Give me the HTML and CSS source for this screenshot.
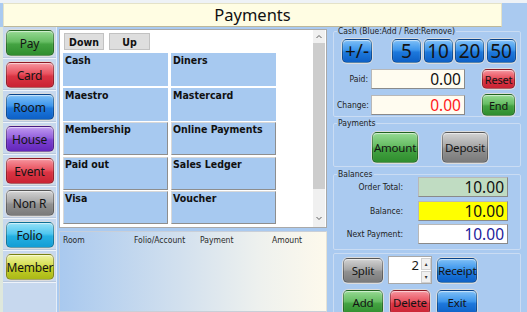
FILE: index.html
```html
<!DOCTYPE html>
<html lang="en">
<head>
  <meta charset="UTF-8" />
  <meta name="viewport" content="width=device-width, initial-scale=1.0"/>
  <title>Payments</title>
  <link rel="stylesheet" href="styles.css">
</head>
<body>
<div class="title-row">
  <div class="title">Payments</div>
</div>
<div class="main">
  <div class="side">
    <div class="side-cell"><button class="gbtn green">Pay</button></div>
    <div class="side-cell"><button class="gbtn red">Card</button></div>
    <div class="side-cell"><button class="gbtn blue">Room</button></div>
    <div class="side-cell"><button class="gbtn purple">House</button></div>
    <div class="side-cell"><button class="gbtn red">Event</button></div>
    <div class="side-cell"><button class="gbtn grey">Non R</button></div>
    <div class="side-cell"><button class="gbtn cyan">Folio</button></div>
    <div class="side-cell"><button class="gbtn lime">Member</button></div>
  </div>

  <div class="centre">
    <div class="tiles-box">
      <div class="tiles-area">
        <div class="pager">
          <button class="pager-btn">Down</button>
          <button class="pager-btn up">Up</button>
        </div>
        <div class="tiles">
          <div class="tile flat">Cash</div>
          <div class="tile flat">Diners</div>
          <div class="tile flat">Maestro</div>
          <div class="tile flat">Mastercard</div>
          <div class="tile">Membership</div>
          <div class="tile">Online Payments</div>
          <div class="tile">Paid out</div>
          <div class="tile">Sales Ledger</div>
          <div class="tile">Visa</div>
          <div class="tile">Voucher</div>
        </div>
      </div>
      <div class="vscroll">
        <svg class="arrow" width="12" height="10" viewBox="0 0 12 10"><path d="M3.5 6 L6 3.5 L8.5 6" fill="none" stroke="#606060" stroke-width="1"/></svg>
        <div class="thumb"></div>
        <div class="track"></div>
        <svg class="arrow" width="12" height="10" viewBox="0 0 12 10"><path d="M3.5 4 L6 6.5 L8.5 4" fill="none" stroke="#606060" stroke-width="1"/></svg>
      </div>
    </div>
    <div class="list">
      <div class="list-head">
        <span class="col-room">Room</span>
        <span class="col-folio">Folio/Account</span>
        <span class="col-pay">Payment</span>
        <span class="col-amt">Amount</span>
      </div>
    </div>
  </div>

  <div class="right">
    <fieldset class="group cash">
      <legend>Cash (Blue:Add / Red:Remove)</legend>
      <div class="coin-row">
        <button class="gbtn blue big plusminus">+/-</button>
        <div class="coins">
          <button class="gbtn blue big coin">5</button>
          <button class="gbtn blue big coin">10</button>
          <button class="gbtn blue big coin">20</button>
          <button class="gbtn blue big coin">50</button>
        </div>
      </div>
      <div class="field-row">
        <span class="field-label">Paid:</span>
        <div class="value cream">0.00</div>
        <button class="gbtn red small-side">Reset</button>
      </div>
      <div class="field-row second">
        <span class="field-label">Change:</span>
        <div class="value cream neg">0.00</div>
        <button class="gbtn green small-side tall">End</button>
      </div>
    </fieldset>

    <fieldset class="group payments">
      <legend>Payments</legend>
      <div class="pay-row">
        <button class="gbtn green pay-btn">Amount</button>
        <button class="gbtn grey pay-btn">Deposit</button>
      </div>
    </fieldset>

    <fieldset class="group balances">
      <legend>Balances</legend>
      <div class="bal-row first">
        <span class="bal-label">Order Total:</span>
        <div class="value mint">10.00</div>
      </div>
      <div class="bal-row">
        <span class="bal-label">Balance:</span>
        <div class="value yellow">10.00</div>
      </div>
      <div class="bal-row">
        <span class="bal-label">Next Payment:</span>
        <div class="value white navy">10.00</div>
      </div>
    </fieldset>

    <fieldset class="group actions">
      <div class="act-row">
        <button class="gbtn grey act">Split</button>
        <div class="spin">
          <span class="spin-val">2</span>
          <div class="spin-btns">
            <span class="spin-btn">&#9652;</span>
            <span class="spin-btn">&#9662;</span>
          </div>
        </div>
        <button class="gbtn blue act">Receipt</button>
      </div>
      <div class="act-row second">
        <button class="gbtn green act">Add</button>
        <button class="gbtn red act">Delete</button>
        <button class="gbtn blue act">Exit</button>
      </div>
    </fieldset>
  </div>
</div>
</body>
</html>
```

FILE: styles.css
```css
body {
  margin: 0;
  width: 527px;
  height: 312px;
  overflow: hidden;
  background-color: #aacaf0;
  font-family: "DejaVu Sans Condensed", "DejaVu Sans", sans-serif;
  color: #1a1a1a;
}

button {
  font-family: inherit;
  cursor: pointer;
}

/* title bar */

.title-row {
  height: 27px;
  background: linear-gradient(to bottom, #eef2f6 0, #eef2f6 3px, #aacaf0 3px);
}

.title {
  box-sizing: border-box;
  margin-left: 3px;
  position: relative;
  top: 3px;
  width: 499px;
  height: 24px;
  background-color: #fffde3;
  border: 1px solid #e4e2c8;
  border-bottom-color: #bdb89a;
  text-align: center;
  font-family: "Noto Sans", sans-serif;
  font-size: 16.5px;
  line-height: 22px;
  color: #111;
}

.main {
  display: flex;
  height: 285px;
}

/* left column */

.side {
  box-sizing: border-box;
  width: 57px;
  margin-right: 2px;
  background-color: #c7d8ee;
  border-left: 3px solid #dfe8dc;
  border-right: 1px solid #e6eef8;
}

.side-cell {
  box-sizing: border-box;
  height: 32px;
  padding-top: 3px;
  border-bottom: 1px solid #eef3fa;
  box-shadow: inset 0 -1px 0 #b9c8dc;
  display: flex;
  justify-content: center;
}

.side-cell .gbtn {
  width: 48px;
  height: 26px;
  font-size: 12px;
  letter-spacing: -0.2px;
}

/* glossy buttons */

.gbtn {
  border: 1px solid rgba(0, 0, 0, 0.3);
  border-radius: 5px;
  padding: 0;
  font-family: "Noto Sans", sans-serif;
  font-size: 12px;
  color: #141414;
  box-shadow: 0 0 0 1px #dcdcdc, inset 0 1px 1px rgba(255, 255, 255, 0.6);
}

.green  { background: linear-gradient(to bottom, #95d992 0%, #66bd63 45%, #44a342 55%, #2f8d2e 100%); }
.red    { background: linear-gradient(to bottom, #f6959e 0%, #e9525f 45%, #da3544 55%, #c92333 100%); }
.blue   { background: linear-gradient(to bottom, #7fc0f7 0%, #3d96ec 45%, #1d78dc 55%, #0d60c6 100%); }
.purple { background: linear-gradient(to bottom, #c09af0 0%, #9460dc 45%, #7a40ce 55%, #6426bb 100%); }
.grey   { background: linear-gradient(to bottom, #d2d2d2 0%, #a8a8a8 45%, #919191 55%, #7a7a7a 100%); }
.cyan   { background: linear-gradient(to bottom, #95e0f7 0%, #4ec6ef 45%, #25b0e2 55%, #129dd4 100%); }
.lime   { background: linear-gradient(to bottom, #eef2a0 0%, #d5de4e 45%, #c3cf28 55%, #aab816 100%); }

/* centre column */

.centre {
  width: 268px;
  padding-top: 2px;
  display: flex;
  flex-direction: column;
}

.tiles-box {
  box-sizing: border-box;
  height: 199px;
  background-color: #fff;
  border: 1px solid #a9a9a9;
  display: flex;
}

.tiles-area {
  flex: 1;
  padding: 3px 0 0 3px;
}

.pager {
  display: flex;
  gap: 5px;
  padding-left: 1px;
}

.pager-btn {
  width: 40px;
  height: 17px;
  padding: 0;
  background-color: #dedede;
  border: 1px solid #c2c2c2;
  font-size: 10.5px;
  font-weight: bold;
  color: #111;
}

.pager-btn.up {
  width: 41px;
}

.tiles {
  display: grid;
  grid-template-columns: 105px 105px;
  grid-auto-rows: 33px;
  column-gap: 3px;
  row-gap: 1.5px;
  margin-top: 3px;
}

.tile {
  box-sizing: border-box;
  background-color: #a7c9f0;
  border: 1px solid #8e8e8e;
  border-top-color: #d8d8d8;
  border-left-color: #d8d8d8;
  padding: 0 1px;
  font-size: 10.5px;
  font-weight: bold;
  line-height: 12px;
  color: #111;
}

.tile.flat {
  border-color: #a7c9f0;
}

.vscroll {
  width: 12px;
  margin-right: 1px;
  padding: 2px 0 4px;
  background-color: #f0f0f0;
  display: flex;
  flex-direction: column;
}

.vscroll .arrow {
  display: block;
  flex: none;
}

.thumb {
  height: 146px;
  margin: 1px 0;
  background-color: #cdcdcd;
}

.track {
  flex: 1;
}

.list {
  box-sizing: border-box;
  margin-top: 3px;
  flex: 1;
  border: 1px solid #c9cfd8;
  border-right-color: #e6e2d4;
  background: linear-gradient(to right, #a9c9ef 0%, #d2e0ee 45%, #eef1ee 75%, #fdf9ec 100%);
}

.list-head {
  position: relative;
  height: 18px;
  font-size: 8.5px;
  color: #2a2a2a;
}

.list-head span {
  position: absolute;
  top: 3px;
}

.col-room  { left: 3px; }
.col-folio { left: 74px; }
.col-pay   { left: 140px; }
.col-amt   { left: 212px; }

/* right column */

.right {
  width: 194px;
  margin-left: 3px;
}

.group {
  box-sizing: border-box;
  width: 188px;
  min-width: 0;
  margin: 0 0 0 3px;
  padding: 0 0 0 3px;
  border: 1px solid #cadcf3;
  border-radius: 2px;
}

.group legend {
  padding: 0 1px;
  font-size: 8.5px;
  line-height: 10px;
  color: #222;
}

.cash {
  height: 91px;
  margin-top: -1px;
}

.coin-row {
  display: flex;
  margin-top: 3px;
}

.big {
  height: 24px;
  font-size: 19px;
  line-height: 20px;
}

.plusminus {
  width: 30px;
  margin-left: 5px;
}

.coins {
  display: flex;
  gap: 2.5px;
  margin-left: 20px;
}

.coin {
  width: 29px;
}

.field-row {
  display: flex;
  align-items: center;
  height: 20px;
  margin-top: 6px;
}

.field-row.second {
  height: 22px;
  margin-top: 5px;
}

.field-label {
  width: 31px;
  text-align: right;
  font-size: 8.5px;
  color: #222;
}

.value {
  box-sizing: border-box;
  height: 20px;
  padding-right: 3px;
  border: 1px solid #b8b8b8;
  border-bottom-color: #8a8a8a;
  border-right-color: #8a8a8a;
  text-align: right;
  font-family: "Noto Sans", sans-serif;
  font-size: 15.5px;
  line-height: 18px;
  color: #111;
}

.field-row .value {
  width: 94px;
  margin-left: 3px;
}

.cream  { background-color: #fffcf0; }
.mint   { background-color: #c0dcc2; }
.yellow { background-color: #ffff00; }
.white  { background-color: #ffffff; }
.neg    { color: #ff1a1a; }
.navy   { color: #1c1c9c; }

.small-side {
  width: 33px;
  height: 20px;
  margin-left: 17px;
  font-size: 11px;
  letter-spacing: -0.2px;
}

.small-side.tall {
  height: 22px;
}

.payments {
  height: 49px;
  margin-top: 1px;
}

.pay-row {
  display: flex;
  gap: 24px;
  margin: 4px 0 0 35px;
}

.pay-btn {
  width: 46px;
  height: 31px;
  font-size: 11.5px;
  letter-spacing: -0.2px;
}

.balances {
  height: 81px;
  margin-top: 2px;
}

.bal-row {
  display: flex;
  align-items: center;
  margin-top: 3.5px;
}

.bal-row.first {
  margin-top: -2px;
}

.bal-label {
  width: 66px;
  text-align: right;
  font-size: 8.5px;
  color: #222;
}

.bal-row .value {
  width: 90px;
  margin-left: 15px;
}

.actions {
  height: 70px;
  margin-top: 3px;
  padding-top: 2px;
}

.act-row {
  display: flex;
  align-items: center;
  gap: 5px;
  padding-left: 6px;
}

.act-row.second {
  gap: 7px;
  margin-top: 6px;
}

.act {
  width: 40px;
  height: 25px;
  font-size: 11.5px;
  letter-spacing: -0.2px;
}

.spin {
  box-sizing: border-box;
  width: 44px;
  height: 28px;
  background-color: #fff;
  border: 1px solid #a8a8a8;
  display: flex;
}

.spin-val {
  flex: 1;
  padding-right: 2px;
  text-align: right;
  font-family: "Noto Sans", sans-serif;
  font-size: 13px;
  line-height: 16px;
}

.spin-btns {
  width: 10px;
  padding: 1px 0;
  display: flex;
  flex-direction: column;
  gap: 1px;
}

.spin-btn {
  flex: 1;
  background-color: #f0f0f0;
  border: 1px solid #d0d0d0;
  font-size: 6px;
  line-height: 10px;
  text-align: center;
  color: #333;
}
```
